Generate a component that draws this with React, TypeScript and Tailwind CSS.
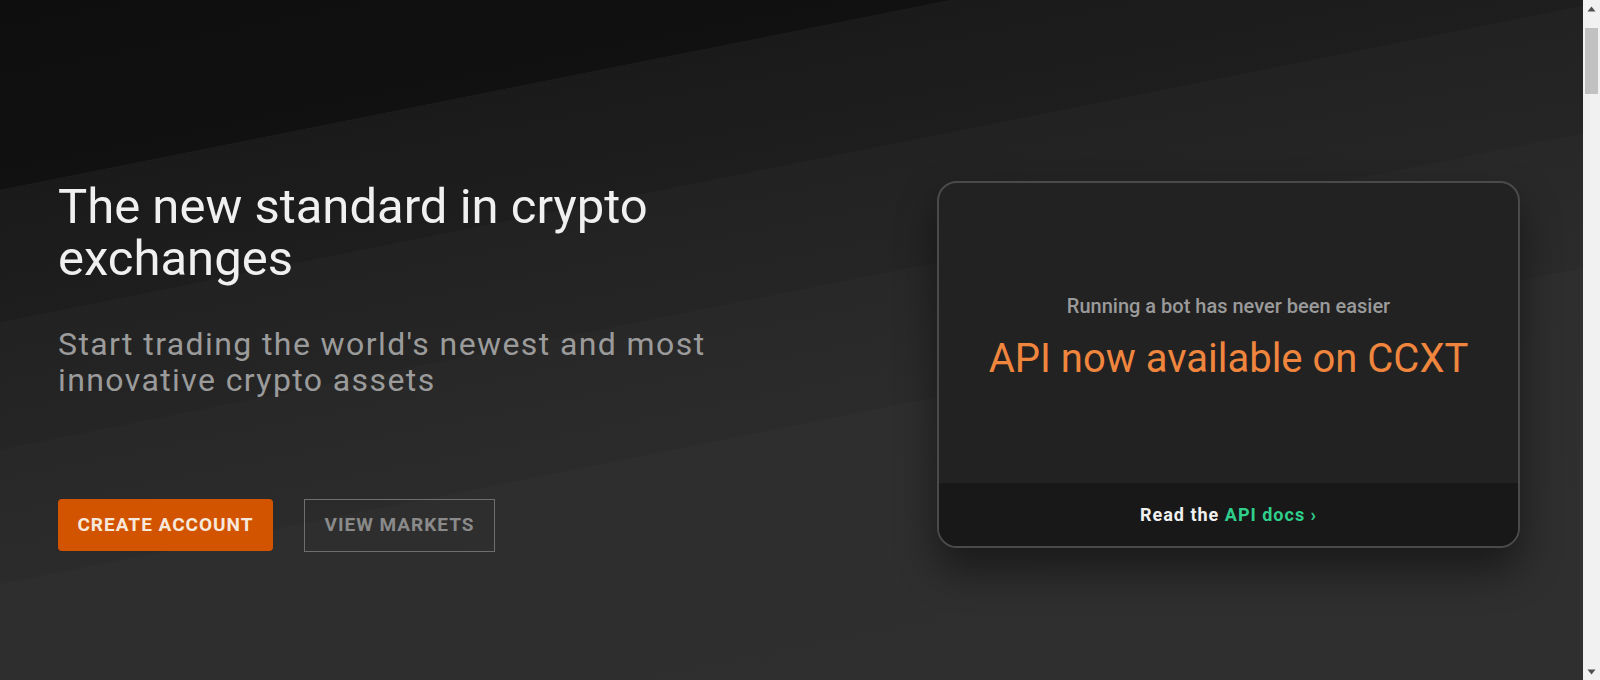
import React from "react";

function Scrollbar() {
  return (
    <div className="flex h-[680px] w-[17px] shrink-0 flex-col items-center bg-[#f1f1f1]">
      <div className="flex h-[17px] w-full items-center justify-center">
        <svg width="9" height="6" viewBox="0 0 9 6">
          <path d="M4.5 0.5 L8.5 5.5 L0.5 5.5 Z" fill="#505050" />
        </svg>
      </div>
      <div className="mt-[11px] h-[66px] w-[13px] bg-[#c1c1c1]" />
      <div className="flex-1" />
      <div className="flex h-[17px] w-full items-center justify-center">
        <svg width="9" height="6" viewBox="0 0 9 6">
          <path d="M0.5 0.5 L8.5 0.5 L4.5 5.5 Z" fill="#505050" />
        </svg>
      </div>
    </div>
  );
}

export default function App() {
  return (
    <div className="flex h-[680px] w-full overflow-hidden font-['Roboto',sans-serif]">
      <main className="h-[680px] flex-1 bg-[linear-gradient(168.7deg,#0e0e0e_0px,#111111_186px,#1a1a1a_186px,#1e1e1e_316px,#222222_316px,#252525_441px,#282828_441px,#2b2b2b_573px,#2e2e2e_573px,#2f2f2f_900px)]">
        <div className="flex items-start justify-between pl-[58px] pr-[63px] pt-[181px]">
          <div className="flex flex-col">
            <h1 className="text-[49px] leading-[52px] font-normal text-[#f0f0f0]">
              The new standard in crypto
              <br />
              exchanges
            </h1>
            <p className="mt-[41px] text-[32px] leading-[36px] tracking-[1.4px] text-[#9b9b9b]">
              Start trading the world's newest and most
              <br />
              innovative crypto assets
            </p>
            <div className="mt-[101px] flex gap-[31px]">
              <button className="h-[52px] w-[215px] rounded-[4px] bg-[#d35400] text-[19px] font-bold uppercase tracking-[1px] text-[#f7e8dc]">
                Create Account
              </button>
              <button className="h-[53px] w-[191px] border border-[#6e6e6e] text-[19px] font-bold uppercase tracking-[1px] text-[#8a8a8a]">
                View Markets
              </button>
            </div>
          </div>
          <div className="flex h-[367px] w-[583px] flex-col overflow-hidden rounded-[20px] border-2 border-[#4a4a4a] bg-[#222222] shadow-[0_22px_40px_rgba(0,0,0,0.45)]">
            <div className="flex flex-1 flex-col items-center pt-[110px]">
              <div className="text-[20px] leading-[26px] font-medium text-[#9a9a9a]">
                Running a bot has never been easier
              </div>
              <div className="mt-[16px] text-[40px] leading-[48px] text-[#f0863e]">
                API now available on CCXT
              </div>
            </div>
            <div className="flex h-[63px] items-center justify-center bg-[#181818] text-[18px] font-bold tracking-[1px] text-[#f0f0f0]">
              <span>
                Read the <span className="text-[#2fcf8c]">API docs ›</span>
              </span>
            </div>
          </div>
        </div>
      </main>
      <Scrollbar />
    </div>
  );
}
